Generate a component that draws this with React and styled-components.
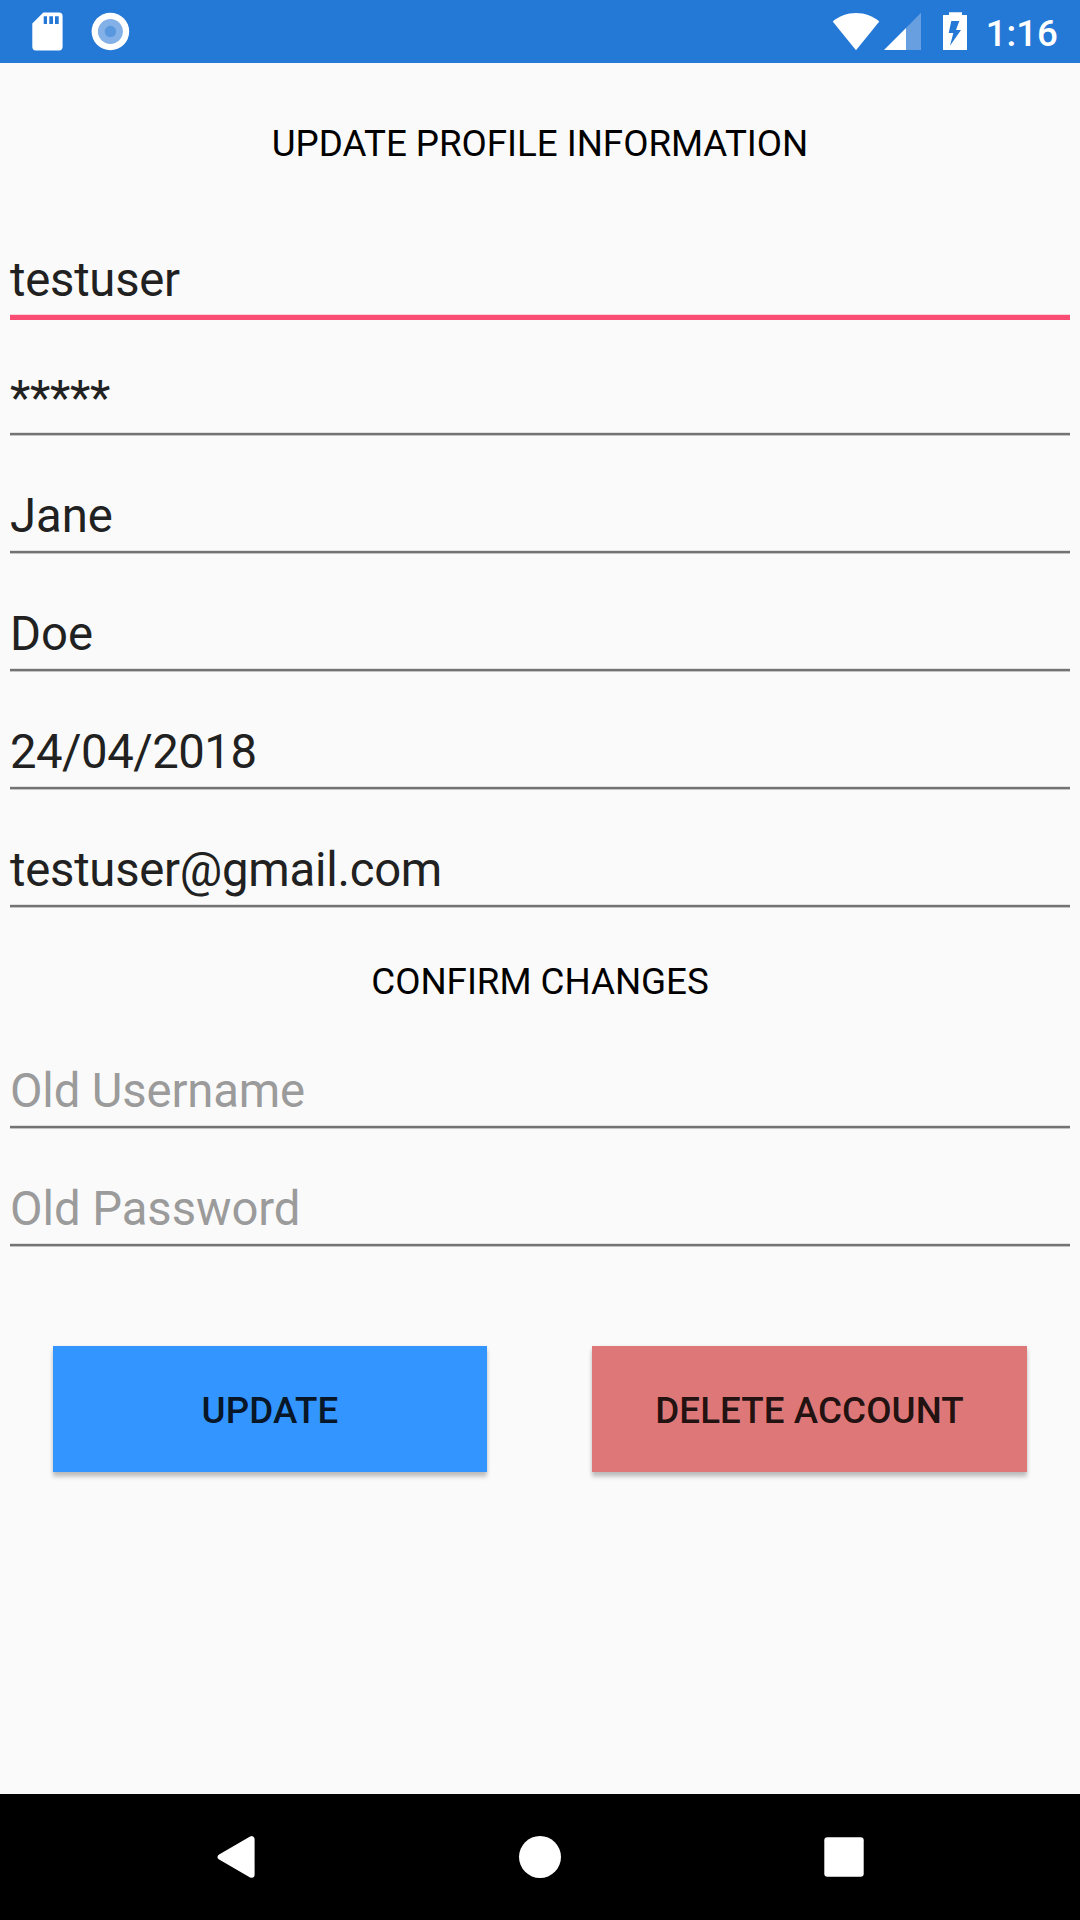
import React from "react";
import styled, { createGlobalStyle } from "styled-components";

const GlobalStyle = createGlobalStyle`
  * { box-sizing: border-box; }
  body { margin: 0; background: #fafafa; }
`;

const Screen = styled.div`
  display: flex;
  flex-direction: column;
  width: 1080px;
  height: 1920px;
  overflow: hidden;
  background: #fafafa;
  font-family: Roboto, "Noto Sans", sans-serif;
`;

const StatusBar = styled.header`
  display: flex;
  justify-content: space-between;
  flex: none;
  height: 63px;
  padding: 0 22px 0 32px;
  background: #2478d6;
`;

const StatusGroup = styled.div`
  display: flex;
  padding-top: 12px;
`;

const Icon = styled.svg`
  display: block;
  flex: none;
  margin-right: ${(p) => p.$after || 0}px;
`;

const Clock = styled.time`
  color: #fff;
  font-size: 36.75px;
  font-weight: 500;
  line-height: 43px;
`;

const Form = styled.main`
  flex: 1;
`;

const Heading = styled.h1`
  margin: 0;
  height: ${(p) => p.$height}px;
  padding-top: ${(p) => p.$top}px;
  color: #000;
  font-size: 36.75px;
  font-weight: 400;
  line-height: 43px;
  letter-spacing: -0.04px;
  text-align: center;
`;

const Field = styled.div`
  height: 118px;
  padding: 52px 10px 0;
`;

const Value = styled.div`
  height: 62px;
  color: ${(p) => (p.$hint ? "#9b9b9b" : "#212121")};
  font-size: 47.25px;
  line-height: 56px;
  letter-spacing: ${(p) => p.$tracking || 0}px;
  white-space: nowrap;
`;

const Underline = styled.div`
  height: ${(p) => (p.$active ? 6 : 4)}px;
  background: ${(p) => (p.$active ? "#f94d73" : "#737373")};
  border-top: 1px solid ${(p) => (p.$active ? "#fbd3dc" : "#e0e0e0")};
  border-bottom: ${(p) => (p.$active ? "0" : "1px solid #c3c3c3")};
`;

const Actions = styled.div`
  display: grid;
  grid-template-columns: 434px 435px;
  column-gap: 105px;
  padding: 99px 53px 0;
`;

const Button = styled.button`
  height: 126px;
  padding: 2px 0 0;
  border: 0;
  background: ${(p) => (p.$danger ? "#de7878" : "#3395ff")};
  color: rgba(0, 0, 0, 0.87);
  font-family: inherit;
  font-size: 36.75px;
  font-weight: 500;
  line-height: 43px;
  letter-spacing: 0.08px;
  box-shadow: 0 5px 4px rgba(0, 0, 0, 0.2), 0 1px 4px rgba(0, 0, 0, 0.1);
`;

const NavBar = styled.nav`
  display: flex;
  align-items: center;
  justify-content: space-between;
  flex: none;
  height: 126px;
  padding: 0 215px;
  background: #000;
`;

const fields = [
  { value: "testuser", tracking: -0.25 },
  { value: "*****", tracking: -0.37 },
  { value: "Jane" },
  { value: "Doe" },
  { value: "24/04/2018", tracking: -0.5 },
  { value: "testuser@gmail.com", tracking: -0.25 },
];

const confirmFields = [
  { value: "Old Username", tracking: -0.15 },
  { value: "Old Password", tracking: -0.05 },
];

export default function App() {
  return (
    <Screen>
      <GlobalStyle />
      <StatusBar>
        <StatusGroup>
          <Icon width="31" height="39" viewBox="32 12 31 39" $after={28}>
            <path
              fill="#fff"
              fillRule="evenodd"
              d="M43.3 12.6H59a3.6 3.6 0 0 1 3.6 3.6v30.6a3.6 3.6 0 0 1-3.6 3.6H35.9a3.6 3.6 0 0 1-3.6-3.6V23.6ZM43.7 16.3V24H47v-7.7ZM49.3 16.3V24H53v-7.7ZM55 16.3V24h3.7v-7.7Z"
            />
          </Icon>
          <Icon width="39" height="39" viewBox="91 12 39 39">
            <circle cx="110.4" cy="31.5" r="18.8" fill="#fff" />
            <circle cx="110.4" cy="31.5" r="12.5" fill="#82b0e7" />
            <circle cx="110.4" cy="31.5" r="5.7" fill="#5998df" />
          </Icon>
        </StatusGroup>
        <StatusGroup>
          <Icon width="48" height="39" viewBox="832 12 48 39" $after={4}>
            <path fill="#fff" d="M856 50.2 832.7 21.4C839 16 847 12.9 856 12.9S873 16 879.3 21.4Z" />
          </Icon>
          <Icon width="37" height="39" viewBox="884 12 37 39" $after={22}>
            <path fill="#679fe0" d="M906 50V28L921 12.8V50Z" />
            <path fill="#fff" d="M884 50 906 28V50Z" />
          </Icon>
          <Icon width="24" height="39" viewBox="943 12 24 39" $after={19}>
            <path
              fill="#fff"
              fillRule="evenodd"
              d="M949 12.2H962V15H967V50H943V15H949ZM951.3 21 948.7 33H953.3L950 45.7 961 30H956L959.3 21Z"
            />
          </Icon>
          <Clock>1:16</Clock>
        </StatusGroup>
      </StatusBar>
      <Form>
        <Heading $top={59} $height={137}>UPDATE PROFILE INFORMATION</Heading>
        {fields.map((field, i) => (
          <Field key={field.value}>
            <Value $tracking={field.tracking}>{field.value}</Value>
            <Underline $active={i === 0} />
          </Field>
        ))}
        <Heading as="h2" $top={52} $height={103}>CONFIRM CHANGES</Heading>
        {confirmFields.map((field) => (
          <Field key={field.value}>
            <Value $hint $tracking={field.tracking}>{field.value}</Value>
            <Underline />
          </Field>
        ))}
        <Actions>
          <Button>UPDATE</Button>
          <Button $danger>DELETE ACCOUNT</Button>
        </Actions>
      </Form>
      <NavBar>
        <Icon width="42" height="42" viewBox="0 0 42 42">
          <path
            fill="#fff"
            stroke="#fff"
            strokeWidth="6"
            strokeLinejoin="round"
            d="M36.6 3.2V38.8L5.6 21Z"
          />
        </Icon>
        <Icon width="42" height="42" viewBox="0 0 42 42">
          <circle cx="21" cy="21" r="21" fill="#fff" />
        </Icon>
        <Icon width="42" height="42" viewBox="0 0 42 42">
          <rect x="1.3" y="1.3" width="39.4" height="39.4" rx="3" fill="#fff" />
        </Icon>
      </NavBar>
    </Screen>
  );
}
